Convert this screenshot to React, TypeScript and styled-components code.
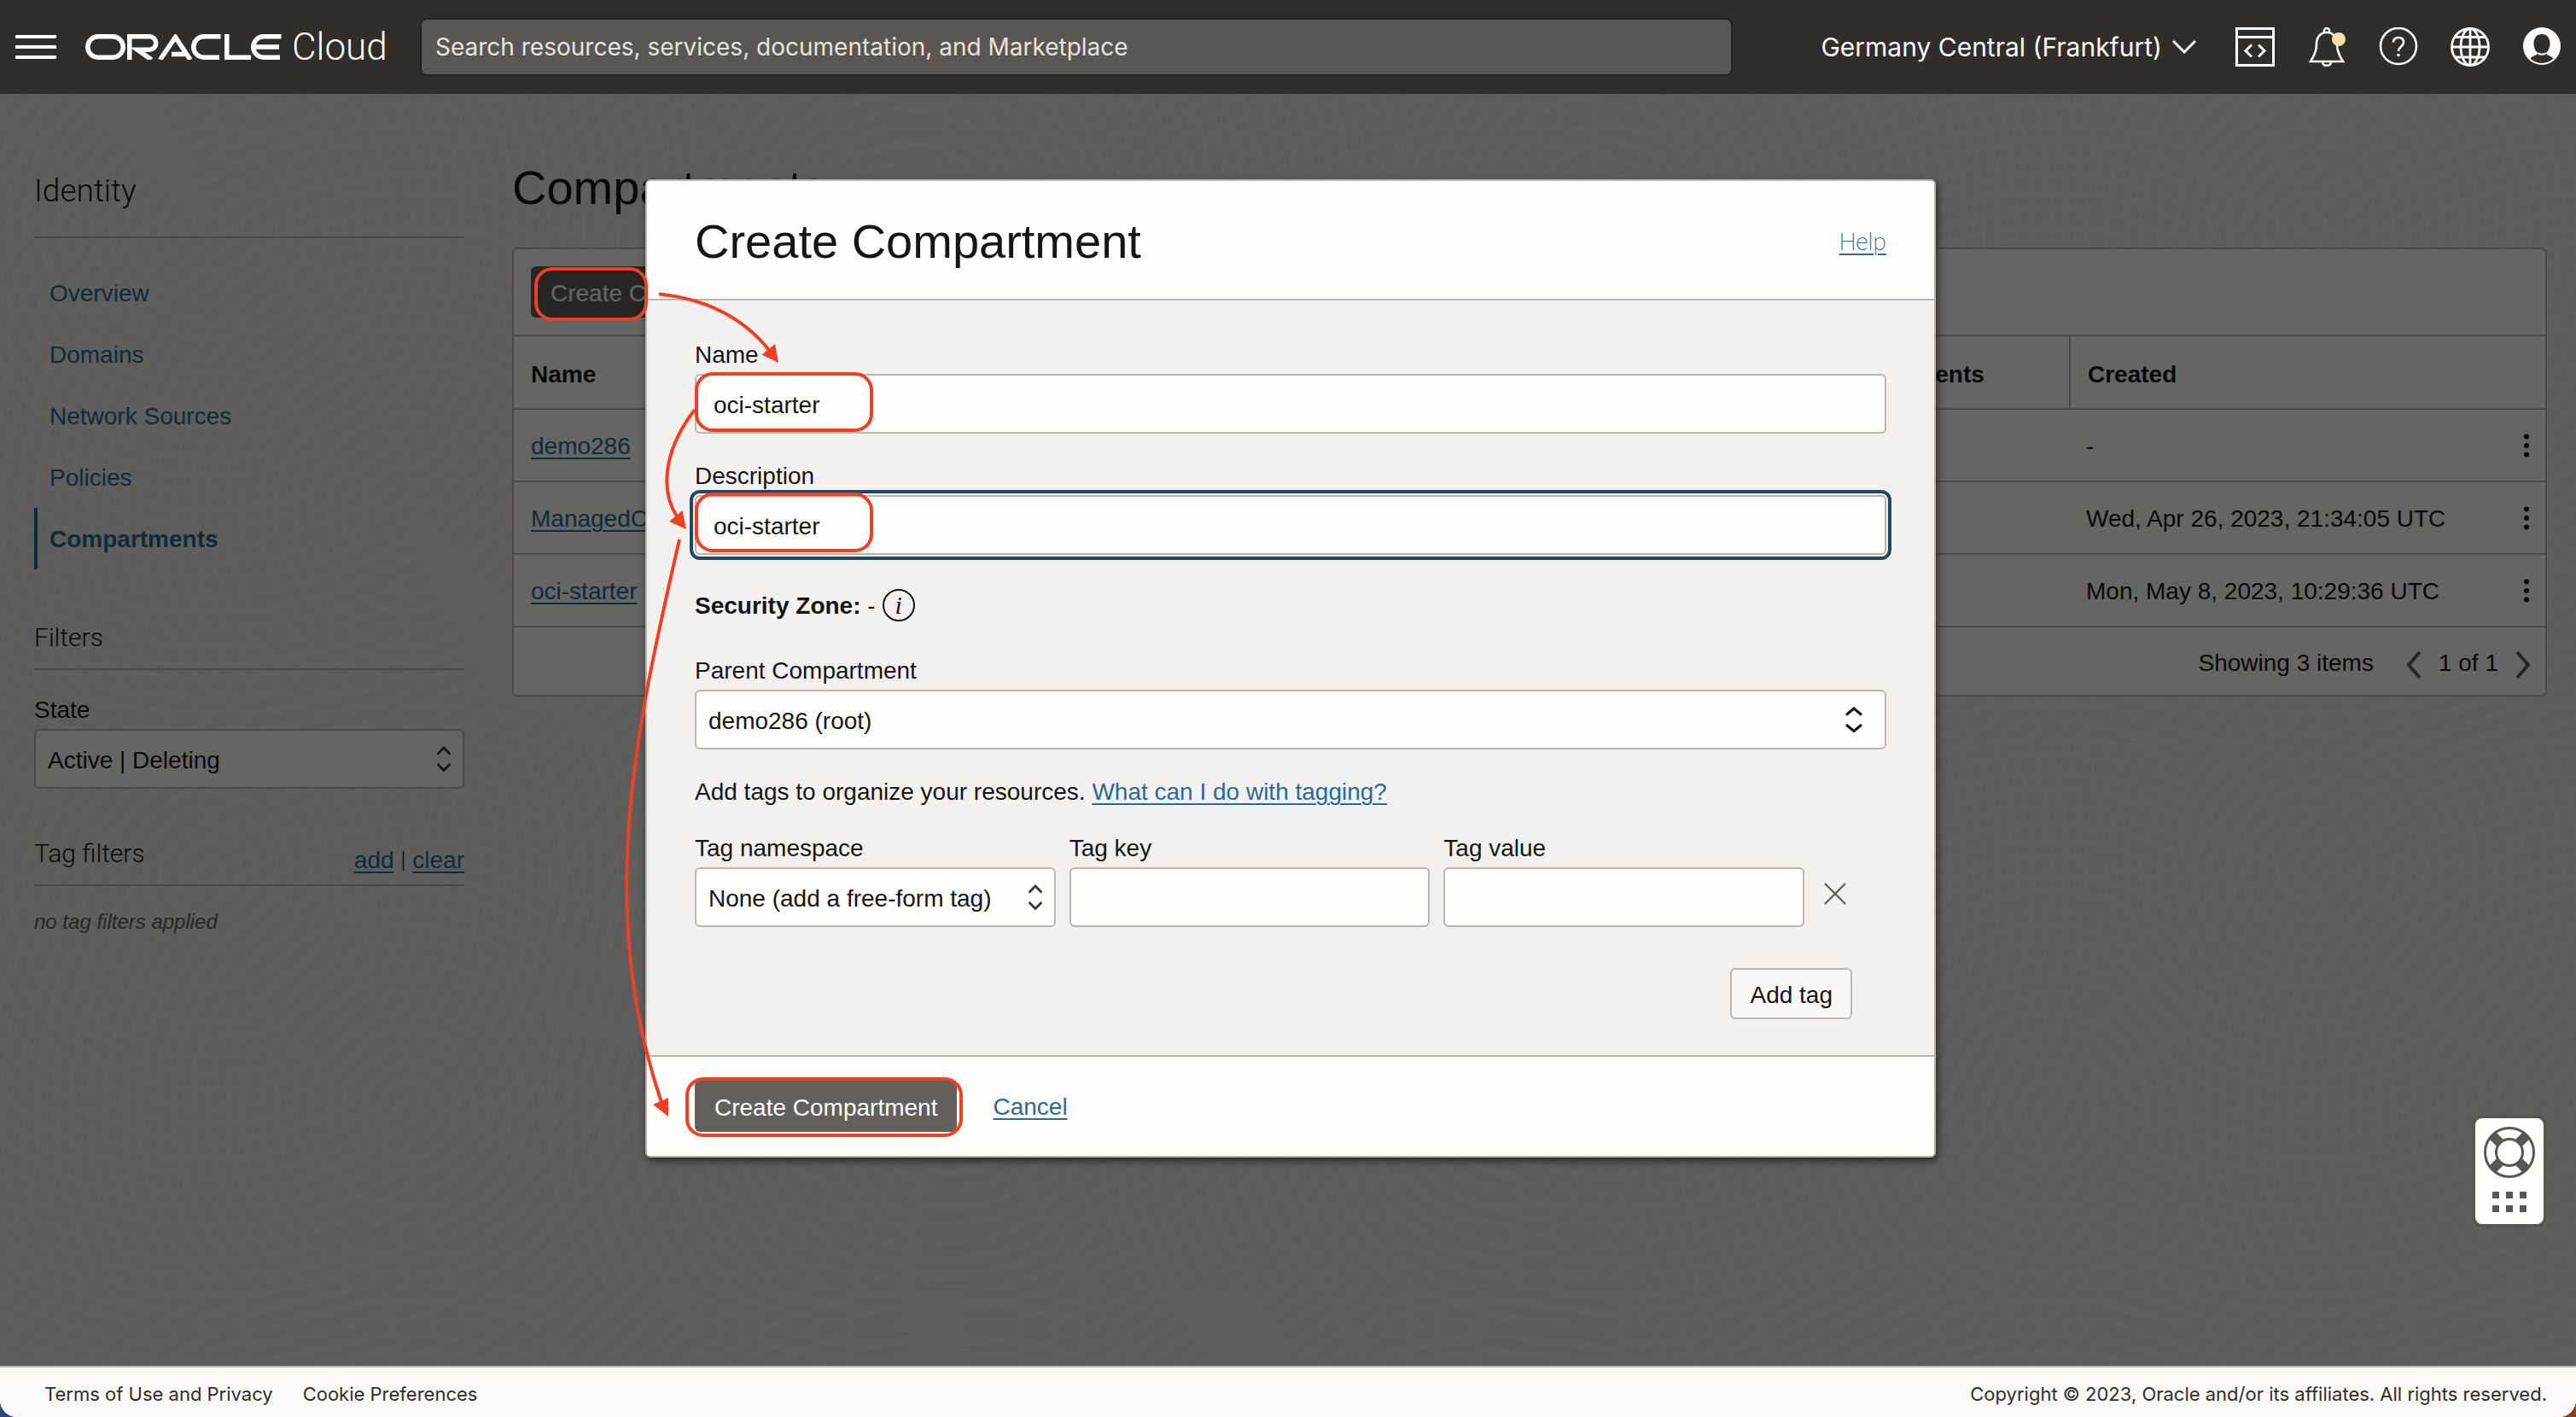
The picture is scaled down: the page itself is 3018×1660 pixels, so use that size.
import React from "react";
import styled, { createGlobalStyle, css } from "styled-components";

const ink = "#161513";
const line = "#bbb5ae";
const link = "#2b6a91";
const mark = "#ef4023";

const GlobalStyle = createGlobalStyle`
  *, *::before, *::after { box-sizing: border-box; }
  html { min-height: 100%; background: linear-gradient(90deg, #2b4a7c 0 50%, #8a3d22 50%); }
  body { margin: 0; }
  body, button, input, select {
    font-family: "Liberation Sans", Arial, sans-serif;
    font-size: 28px;
    line-height: 36px;
    color: ${ink};
  }
  h1, h2, h3, p, ul { margin: 0; padding: 0; font-weight: 400; }
  button { cursor: pointer; }
  svg { display: block; flex: none; }
`;

const Shell = styled.div`
  display: flex;
  flex-direction: column;
  min-height: 100vh;
  border-radius: 0 0 20px 20px;
  overflow: hidden;
  background: #efeeeb;
`;

/* ---------- top bar ---------- */

const TopBar = styled.header`
  display: flex;
  align-items: center;
  height: 110px;
  padding: 0 17px 0 18px;
  background: #312d2a;
  color: #fff;
`;

const BarButton = styled.button`
  display: flex;
  align-items: center;
  justify-content: center;
  padding: 0;
  border: 0;
  background: none;
  color: inherit;
`;

const Brand = styled.a`
  display: flex;
  align-items: center;
  gap: 12px;
  width: 392px;
  margin-left: 34px;
  color: #fff;
  text-decoration: none;
  font: 300 44px/52px Roboto, sans-serif;
`;

const SearchBox = styled.input`
  flex: 0 1 1538px;
  min-width: 0;
  height: 68px;
  padding: 0 16px;
  border: 2px solid #26221f;
  border-radius: 8px;
  background: #5b5652;
  font-family: Inter, sans-serif;
  font-size: 28px;
  &::placeholder { color: #e6e4e1; opacity: 1; }
`;

const Region = styled(BarButton)`
  gap: 12px;
  margin-left: auto;
  margin-right: 46px;
  font-family: Inter, sans-serif;
  font-size: 30px;
`;

const IconRow = styled.nav`
  display: flex;
  gap: 38px;
`;

/* ---------- page below the bar ---------- */

const Stage = styled.div`
  position: relative;
  flex: 1;
  background-image:
    repeating-radial-gradient(circle at 30% 20%, rgba(60, 50, 40, 0.018) 0 8px, transparent 12px 20px),
    repeating-radial-gradient(circle at 75% 70%, rgba(60, 50, 40, 0.018) 0 8px, transparent 12px 20px);
  background-size: 820px 760px, 640px 700px;
`;

const Columns = styled.div`
  display: grid;
  grid-template-columns: 504px minmax(0, 1fr);
  gap: 56px;
  padding: 0 34px 0 40px;
`;

const Sidebar = styled.aside`
  padding-top: 92px;
`;

const SideTitle = styled.h2`
  padding-bottom: 31px;
  border-bottom: 2px solid ${line};
  font: 300 37px/44px Roboto, sans-serif;
`;

const NavList = styled.ul`
  margin-top: 28px;
  list-style: none;
`;

const NavLink = styled.a<{ $active?: boolean }>`
  display: flex;
  align-items: center;
  height: 72px;
  padding: 2px 0 0 14px;
  border-left: 4px solid ${(p) => (p.$active ? link : "transparent")};
  color: ${link};
  font-weight: ${(p) => (p.$active ? 700 : 400)};
  text-decoration: none;
`;

const SideHead = styled.div<{ $top: number }>`
  display: flex;
  justify-content: space-between;
  align-items: flex-end;
  margin-top: ${(p) => p.$top}px;
  border-bottom: 2px solid ${line};
  h3 {
    padding-bottom: 16px;
    font: 300 30px/40px Roboto, sans-serif;
  }
  p { padding-bottom: 10px; }
`;

const Divider = styled.span`
  font-family: Roboto, sans-serif;
  font-weight: 300;
`;

const TextLink = styled.a`
  color: ${link};
  text-decoration: underline;
  text-decoration-thickness: 2px;
  text-underline-offset: 4px;
`;

const EmptyNote = styled.p`
  margin-top: 26px;
  color: #64605c;
  font-size: 24px;
  font-style: italic;
  line-height: 32px;
`;

const Content = styled.main`
  padding-top: 78px;
`;

const PageTitle = styled.h1`
  margin-bottom: 38px;
  font-size: 56px;
  line-height: 64px;
`;

const Panel = styled.section`
  border: 2px solid ${line};
  border-radius: 6px;
  background: #fcfcfb;
`;

const Toolbar = styled.div`
  display: flex;
  align-items: center;
  height: 100px;
  padding: 0 20px;
`;

const PrimaryButton = styled.button`
  height: 60px;
  padding: 3px 23px 0;
  border: 0;
  border-radius: 6px;
  background: #645f5b;
  color: #fff;
`;

const Grid = styled.table`
  width: 100%;
  border-collapse: separate;
  border-spacing: 0;
  table-layout: fixed;
  th, td {
    height: 85px;
    padding: 2px 0 0 20px;
    border-top: 2px solid ${line};
    text-align: left;
    vertical-align: middle;
    white-space: nowrap;
  }
  th { height: 86px; padding-top: 6px; font-weight: 700; }
  th + th:not(:empty) { border-left: 2px solid ${line}; }
  td:last-child { padding: 0; }
`;

const Col = styled.col<{ $w?: number }>`
  width: ${(p) => (p.$w ? `${p.$w}px` : "auto")};
`;

const MenuButton = styled(BarButton)`
  width: 44px;
  height: 60px;
`;

const Pager = styled.div`
  display: flex;
  align-items: center;
  justify-content: flex-end;
  height: 81px;
  padding: 4px 17px 0 0;
  border-top: 2px solid ${line};
  color: ${ink};
  span:first-child { margin-right: 38px; }
  button { padding-top: 4px; }
`;

const PagerCount = styled.span`
  margin: 0 20px;
`;

/* ---------- form parts ---------- */

const Field = styled.div<{ $top?: number }>`
  display: flex;
  flex-direction: column;
  gap: 4px;
  min-width: 0;
  margin-top: ${(p) => p.$top ?? 0}px;
`;

const boxed = css`
  width: 100%;
  height: 70px;
  border: 2px solid ${line};
  border-radius: 6px;
  background: #fdfdfb;
`;

const TextInput = styled.input<{ $focus?: boolean }>`
  ${boxed}
  padding: 4px 20px 0;
  outline: none;
  ${(p) => p.$focus && css`
    outline: 4px solid #1f4960;
    outline-offset: 2px;
  `}
`;

const SelectWrap = styled.div<{ $inset: number }>`
  position: relative;
  select {
    ${boxed}
    appearance: none;
    padding: 4px 50px 0 14px;
  }
  svg {
    position: absolute;
    top: 20px;
    right: ${(p) => p.$inset}px;
    pointer-events: none;
  }
`;

/* ---------- dialog ---------- */

const Backdrop = styled.div`
  position: absolute;
  inset: 0;
  display: flex;
  align-items: flex-start;
  justify-content: center;
  padding: 100px 0 0 6px;
  background: rgba(0, 0, 0, 0.6);
`;

const Dialog = styled.form`
  position: relative;
  width: 1512px;
  border: 2px solid ${line};
  border-radius: 6px;
  background: #fdfdfb;
  box-shadow: 2px 4px 10px rgba(0, 0, 0, 0.6);
`;

const DialogHead = styled.div`
  display: flex;
  align-items: center;
  justify-content: space-between;
  height: 140px;
  padding: 4px 56px 0;
  border-bottom: 2px solid ${line};
  h2 { font-size: 56px; line-height: 64px; }
`;

const HelpLink = styled(TextLink)`
  padding-top: 2px;
  font-family: Roboto, sans-serif;
  font-weight: 200;
`;

const DialogBody = styled.div`
  display: flex;
  flex-direction: column;
  gap: 32px;
  padding: 46px 56px 42px;
  background: #f3f1f0;
`;

const ZoneRow = styled.div`
  display: flex;
  align-items: center;
  gap: 8px;
  height: 54px;
  span { padding-top: 2px; }
`;

const InfoButton = styled.button`
  width: 38px;
  height: 38px;
  padding: 0;
  border: 2px solid ${ink};
  border-radius: 50%;
  background: none;
  font: italic 400 30px/32px "Liberation Serif", serif;
`;

const TagHint = styled.p`
  height: 34px;
`;

const TagArea = styled.div`
  display: flex;
  flex-direction: column;
  align-items: flex-end;
  gap: 48px;
  padding-right: 40px;
`;

const TagRow = styled.div`
  display: grid;
  grid-template-columns: repeat(3, minmax(0, 1fr)) 40px;
  gap: 16px;
  align-items: end;
  width: 100%;
`;

const RemoveButton = styled(BarButton)`
  height: 70px;
  padding-bottom: 8px;
`;

const PlainButton = styled.button`
  height: 60px;
  padding: 3px 21px 0;
  border: 2px solid ${line};
  border-radius: 6px;
  background: #f9f8f7;
`;

const DialogFoot = styled.div`
  display: flex;
  align-items: center;
  gap: 42px;
  height: 118px;
  padding: 0 56px;
  border-top: 2px solid ${line};
  a { padding-top: 2px; }
`;

const Marks = styled.svg`
  position: absolute;
  top: -2px;
  left: -2px;
  width: 1512px;
  height: 1146px;
  overflow: visible;
  pointer-events: none;
`;

/* ---------- support widget and footer ---------- */

const Support = styled.button`
  position: absolute;
  right: 34px;
  bottom: 162px;
  display: flex;
  flex-direction: column;
  align-items: center;
  gap: 16px;
  width: 88px;
  height: 132px;
  padding: 10px 0 0;
  border: 4px solid #575651;
  border-radius: 12px;
  background: #fdfdfb;
`;

const Footer = styled.footer`
  display: flex;
  align-items: center;
  gap: 35px;
  height: 60px;
  padding: 4px 34px 0 52px;
  border-top: 2px solid ${line};
  background: #fbf9f8;
  color: #312d2a;
  font-family: Inter, sans-serif;
  font-size: 22px;
  a { color: inherit; text-decoration: none; }
  span { margin-left: auto; }
`;

const UpDown = ({ large }: { large?: boolean }) => (
  <svg width={large ? 22 : 18} height="30" viewBox="0 0 22 30" preserveAspectRatio="none" fill="none" stroke={large ? ink : "#3a3836"} strokeWidth="3">
    <path d="M2 9.500 11 2 20 9.500M2 21l9 7.500 9-7.500" />
  </svg>
);

const OracleMark = () => (
  <svg width="230" height="30" viewBox="0 0 230 30" fill="none" stroke="#fff" strokeWidth="5.5" role="img" aria-label="Oracle">
    <rect x="2.75" y="2.75" width="41.5" height="24.5" rx="12.25" />
    <path d="M51.75 30V2.75H75a7.6 7.6 0 0 1 0 15.5H61L77.5 30" />
    <path d="M87.500 30 105.500 3.500 123 30M101 23.500H118" />
    <path d="M158.500 2.750H139a12.250 12.250 0 0 0 0 24.500H157" />
    <path d="M165.750 0V27.250H194" />
    <path d="M229.500 2.750H209a12.250 12.250 0 0 0 0 24.500H228M199 15H227" />
  </svg>
);

const rows = [
  { name: "demo286", created: "-" },
  { name: "ManagedCompartmentForPaaS", created: "Wed, Apr 26, 2023, 21:34:05 UTC" },
  { name: "oci-starter", created: "Mon, May 8, 2023, 10:29:36 UTC" },
];

const navItems = ["Overview", "Domains", "Network Sources", "Policies", "Compartments"];

export default function App() {
  return (
    <Shell>
      <GlobalStyle />
      <TopBar>
        <BarButton aria-label="Navigation menu">
          <svg width="48" height="28" fill="#fff">
            <rect width="48" height="4" rx="1" />
            <rect y="12" width="48" height="4" rx="1" />
            <rect y="24" width="48" height="4" rx="1" />
          </svg>
        </BarButton>
        <Brand href="#">
          <OracleMark />
          Cloud
        </Brand>
        <SearchBox type="search" aria-label="Search" placeholder="Search resources, services, documentation, and Marketplace" />
        <Region>
          Germany Central (Frankfurt)
          <svg width="28" height="16" fill="none" stroke="#fff" strokeWidth="3"><path d="M1 1l13 13L27 1" /></svg>
        </Region>
        <IconRow aria-label="Tools">
          <BarButton aria-label="Developer tools">
            <svg width="46" height="46" fill="none" stroke="#fff" strokeWidth="3">
              <path d="M1.500 1.500h43v43h-43zM1.500 11.500h43M19 20.500l-7 7 7 7M27 20.500l7 7-7 7" />
            </svg>
          </BarButton>
          <BarButton aria-label="Announcements">
            <svg width="46" height="46" fill="none" stroke="#fff" strokeWidth="2.600">
              <path d="M20 6V4a3 3 0 0 1 6 0v2M4 40c4-6 7-12 7-20 0-9 5-14 12-14s12 5 12 14c0 8 3 14 7 20zM18 41c0 5 10 5 10 0" />
              <circle cx="37" cy="14" r="8" fill="#f5dfa5" stroke="none" />
            </svg>
          </BarButton>
          <BarButton aria-label="Help">
            <svg width="46" height="46" fill="none" stroke="#fff" strokeWidth="2.600">
              <circle cx="23" cy="22" r="21" />
              <path d="M17 17.500c0-3.500 2.400-5.500 6-5.500s6 2 6 5.500c0 5-6 5-6 10.500" />
              <circle cx="23" cy="32.500" r="1.800" fill="#fff" stroke="none" />
            </svg>
          </BarButton>
          <BarButton aria-label="Language">
            <svg width="46" height="46" fill="none" stroke="#fff" strokeWidth="2.800">
              <circle cx="23" cy="23" r="21.500" />
              <ellipse cx="23" cy="23" rx="11" ry="21.500" />
              <path d="M23 1.500v43M1.500 23h43M5 11.500h36M5 35h36" />
            </svg>
          </BarButton>
          <BarButton aria-label="Profile">
            <svg width="46" height="46" fill="none">
              <circle cx="23" cy="22" r="22" fill="#fff" />
              <path d="M23 8c6 0 9.500 4.500 9.500 11 0 5-2 9-5 11 1 3 6 3 9 6.500A20 20 0 0 1 23 42a20 20 0 0 1-13.500-5.500c3-3.500 8-3.500 9-6.500-3-2-5-6-5-11C13.500 12.500 17 8 23 8z" fill="#312d2a" />
              <path d="M18.500 30.500c3 1.600 6 1.600 9 0" stroke="#fff" strokeWidth="2" />
            </svg>
          </BarButton>
        </IconRow>
      </TopBar>

      <Stage>
        <Columns>
          <Sidebar>
            <SideTitle>Identity</SideTitle>
            <NavList>
              {navItems.map((n) => (
                <li key={n}>
                  <NavLink href="#" $active={n === "Compartments"}>{n}</NavLink>
                </li>
              ))}
            </NavList>
            <SideHead $top={60}><h3>Filters</h3></SideHead>
            <Field $top={29}>
              <label htmlFor="state">State</label>
              <SelectWrap $inset={15}>
                <select id="state"><option>Active | Deleting</option></select>
                <UpDown />
              </SelectWrap>
            </Field>
            <SideHead $top={56}>
              <h3>Tag filters</h3>
              <p><TextLink href="#">add</TextLink> <Divider>|</Divider> <TextLink href="#">clear</TextLink></p>
            </SideHead>
            <EmptyNote>no tag filters applied</EmptyNote>
          </Sidebar>

          <Content>
            <PageTitle>Compartments</PageTitle>
            <Panel>
              <Toolbar><PrimaryButton>Create Compartment</PrimaryButton></Toolbar>
              <Grid>
                <colgroup>
                  <Col /><Col /><Col $w={367} /><Col $w={514} /><Col $w={44} />
                </colgroup>
                <thead>
                  <tr><th>Name</th><th>Status</th><th>Subcompartments</th><th>Created</th><th></th></tr>
                </thead>
                <tbody>
                  {rows.map((r) => (
                    <tr key={r.name}>
                      <td><TextLink href="#">{r.name}</TextLink></td>
                      <td>Active</td>
                      <td></td>
                      <td>{r.created}</td>
                      <td>
                        <MenuButton aria-label={`Actions for ${r.name}`}>
                          <svg width="6" height="28" fill={ink}>
                            <circle cx="3" cy="3.500" r="3" /><circle cx="3" cy="14" r="3" /><circle cx="3" cy="24.500" r="3" />
                          </svg>
                        </MenuButton>
                      </td>
                    </tr>
                  ))}
                </tbody>
              </Grid>
              <Pager>
                <span>Showing 3 items</span>
                <BarButton aria-label="Previous page">
                  <svg width="18" height="32" fill="none" stroke="#64605c" strokeWidth="4"><path d="M16 1 3 16l13 15" /></svg>
                </BarButton>
                <PagerCount>1 of 1</PagerCount>
                <BarButton aria-label="Next page">
                  <svg width="18" height="32" fill="none" stroke="#64605c" strokeWidth="4"><path d="M2 1l13 15L2 31" /></svg>
                </BarButton>
              </Pager>
            </Panel>
          </Content>
        </Columns>

        <Backdrop>
          <Dialog role="dialog" aria-labelledby="dialog-title" onSubmit={(e) => e.preventDefault()}>
            <DialogHead>
              <h2 id="dialog-title">Create Compartment</h2>
              <HelpLink href="#">Help</HelpLink>
            </DialogHead>
            <DialogBody>
              <Field>
                <label htmlFor="name">Name</label>
                <TextInput id="name" defaultValue="oci-starter" />
              </Field>
              <Field>
                <label htmlFor="description">Description</label>
                <TextInput id="description" defaultValue="oci-starter" $focus />
              </Field>
              <ZoneRow>
                <span><b>Security Zone:</b> -</span>
                <InfoButton type="button" aria-label="About security zones">i</InfoButton>
              </ZoneRow>
              <Field>
                <label htmlFor="parent">Parent Compartment</label>
                <SelectWrap $inset={27}>
                  <select id="parent"><option>demo286 (root)</option></select>
                  <UpDown large />
                </SelectWrap>
              </Field>
              <TagHint>Add tags to organize your resources. <TextLink href="#">What can I do with tagging?</TextLink></TagHint>
              <TagArea>
                <TagRow>
                  <Field>
                    <label htmlFor="namespace">Tag namespace</label>
                    <SelectWrap $inset={15}>
                      <select id="namespace"><option>None (add a free-form tag)</option></select>
                      <UpDown />
                    </SelectWrap>
                  </Field>
                  <Field>
                    <label htmlFor="tag-key">Tag key</label>
                    <TextInput id="tag-key" />
                  </Field>
                  <Field>
                    <label htmlFor="tag-value">Tag value</label>
                    <TextInput id="tag-value" />
                  </Field>
                  <RemoveButton type="button" aria-label="Remove tag">
                    <svg width="26" height="26" stroke="#64605c" strokeWidth="2.400"><path d="M1 1l24 24M25 1 1 25" /></svg>
                  </RemoveButton>
                </TagRow>
                <PlainButton type="button">Add tag</PlainButton>
              </TagArea>
            </DialogBody>
            <DialogFoot>
              <PrimaryButton type="submit">Create Compartment</PrimaryButton>
              <TextLink href="#">Cancel</TextLink>
            </DialogFoot>

            <Marks viewBox="756 210 1512 1146" fill="none" stroke={mark} strokeWidth="4" aria-hidden="true">
              <rect x="628" y="315" width="129" height="59" rx="19" />
              <rect x="816" y="438" width="205" height="66" rx="19" />
              <rect x="816" y="579" width="205" height="66" rx="19" />
              <rect x="805" y="1264" width="321" height="66" rx="19" />
              <path d="M772 344.500Q855 353 901 410" />
              <path d="M814 480C783 520 770 568 793 605" />
              <path d="M796 632C748 842 696 1060 775 1291" />
              <g fill={mark} stroke="none">
                <path d="M912 425 908 403 892.500 415.500z" />
                <path d="M804 620 799.500 598 784 611z" />
                <path d="M783 1308 783 1286 765 1294z" />
              </g>
            </Marks>
          </Dialog>
        </Backdrop>

        <Support aria-label="Support">
          <svg width="60" height="60" viewBox="0 0 60 60" fill="none" stroke="#575651">
            <circle cx="30" cy="30" r="28.500" strokeWidth="3" />
            <circle cx="30" cy="30" r="15.500" strokeWidth="3" />
            <path d="M10.500 10.500 19 19M49.500 10.500 41 19M10.500 49.500 19 41M49.500 49.500 41 41" strokeWidth="11" />
          </svg>
          <svg width="40" height="24" fill="#575651">
            {[0, 16, 32].map((x) => (
              <React.Fragment key={x}>
                <rect x={x} width="8" height="8" />
                <rect x={x} y="16" width="8" height="8" />
              </React.Fragment>
            ))}
          </svg>
        </Support>
      </Stage>

      <Footer>
        <a href="#">Terms of Use and Privacy</a>
        <a href="#">Cookie Preferences</a>
        <span>Copyright © 2023, Oracle and/or its affiliates. All rights reserved.</span>
      </Footer>
    </Shell>
  );
}
